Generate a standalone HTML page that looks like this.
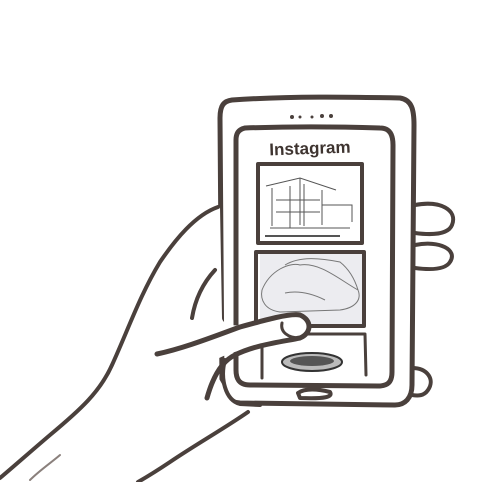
<!DOCTYPE html>
<html><head><style>html,body{margin:0;padding:0;background:#fff;width:482px;height:482px;overflow:hidden}</style></head>
<body>
<svg width="482" height="482" viewBox="0 0 482 482" xmlns="http://www.w3.org/2000/svg">
<g fill="none" stroke="#4a403c" stroke-linecap="round" stroke-linejoin="round">
<!-- right fingers -->
<path d="M415 205 C440 200 458 210 452 225 C448 235 430 235 415 233" stroke-width="4"/>
<path d="M415 245 C440 240 458 250 450 262 C445 270 430 270 415 268" stroke-width="4"/>
<path d="M412 368 C428 368 435 380 428 390 C424 396 418 396 412 395" stroke-width="4"/>
<!-- phone -->
<path d="M232 100 C290 96 350 97 400 98 C412 100 414 110 414 125 L412 385 C412 398 405 405 395 405 L240 403 C228 402 222 395 222 385 L220 118 C220 105 224 101 232 100 Z" stroke-width="5"/>
<path d="M245 128 C300 126 350 127 380 128 C390 128 393 135 393 145 L392 372 C392 382 388 386 378 386 L250 385 C240 385 236 380 236 370 L236 140 C236 132 240 129 245 128 Z" stroke-width="5"/>
<path d="M298 393 C305 388 318 389 330 392 C333 397 325 399 300 398 Z" stroke-width="4"/>
<!-- photos -->
<rect x="258" y="164" width="104" height="79" stroke-width="4"/>
<rect x="256" y="252" width="108" height="74" stroke-width="4"/>
<path d="M262 334 L365 334 L366 375" stroke-width="3"/>
<path d="M262 345 L262 378" stroke-width="3"/>
</g>
<circle cx="292" cy="117" r="2" fill="#4a403c"/><circle cx="300" cy="117" r="1.5" fill="#4a403c"/><circle cx="312" cy="117" r="1.5" fill="#4a403c"/><circle cx="322" cy="116" r="2" fill="#4a403c"/><circle cx="331" cy="116" r="2" fill="#4a403c"/>
<!-- house -->
<g fill="none" stroke="#555" stroke-width="1">
<path d="M266 186 L300 178 L336 190 M272 188 L272 226 M290 186 L290 228 M304 184 L304 226 M322 190 L322 225 M276 200 L320 200 M276 212 L320 212 M270 228 L350 228 M322 205 L352 205 L352 222 M300 178 L300 225"/>
<path d="M265 236 L340 236" stroke-width="2"/>
</g>
<rect x="260" y="254" width="102" height="70" fill="#ececf0"/>
<g fill="none" stroke="#777" stroke-width="1">
<path d="M262 290 C270 270 290 262 300 265 C320 262 340 280 358 290 C362 300 355 308 340 310 L280 312 C265 310 260 300 262 290 Z"/>
<path d="M285 265 C300 256 320 258 340 262 C350 270 355 280 358 290"/>
<path d="M285 293 C300 290 315 295 325 300"/>
</g>
<ellipse cx="312" cy="362" rx="30" ry="9" fill="#bbb" stroke="#333" stroke-width="2"/>
<ellipse cx="312" cy="361" rx="22" ry="5" fill="#555"/>
<!-- hand (white fill over phone) -->
<path d="M218 207 C195 215 175 240 160 262 C140 295 125 335 105 380 C90 405 50 440 0 478 L0 482 L140 482 C170 462 215 435 250 410 L232 400 C222 385 215 372 212 362 C230 350 265 345 290 340 C305 338 312 328 305 318 C298 312 280 315 240 325 C225 327 222 320 222 318 L220 207 Z" fill="#fff" stroke="none"/>
<g fill="none" stroke="#4a403c" stroke-linecap="round" stroke-linejoin="round">
<path d="M218 207 C195 215 175 240 160 262 C140 295 128 330 112 365 C100 392 80 410 50 435 C30 452 12 468 0 478" stroke-width="4"/>
<path d="M215 270 C203 283 195 300 192 318" stroke-width="4"/>
<path d="M157 354 C185 348 215 336 240 327 C265 320 290 313 300 315 C312 320 312 333 300 338 C280 342 255 345 235 355 C220 362 212 380 207 398" stroke-width="5"/>
<path d="M282 323 C280 332 288 338 300 338" stroke-width="3"/>
<path d="M225 360 C220 378 225 400 240 404 L260 405" stroke-width="4"/>
<path d="M248 412 C225 428 195 445 170 462 C158 470 145 478 138 482" stroke-width="4"/>
<path d="M30 480 C40 470 52 462 60 455" stroke-width="2" stroke="#8a807c"/>
</g>
<text x="310" y="154" text-anchor="middle" font-family="Liberation Sans, sans-serif" font-weight="bold" font-size="17" fill="#3e3430" transform="rotate(-2 310 150)">Instagram</text>
</svg>
</body></html>
